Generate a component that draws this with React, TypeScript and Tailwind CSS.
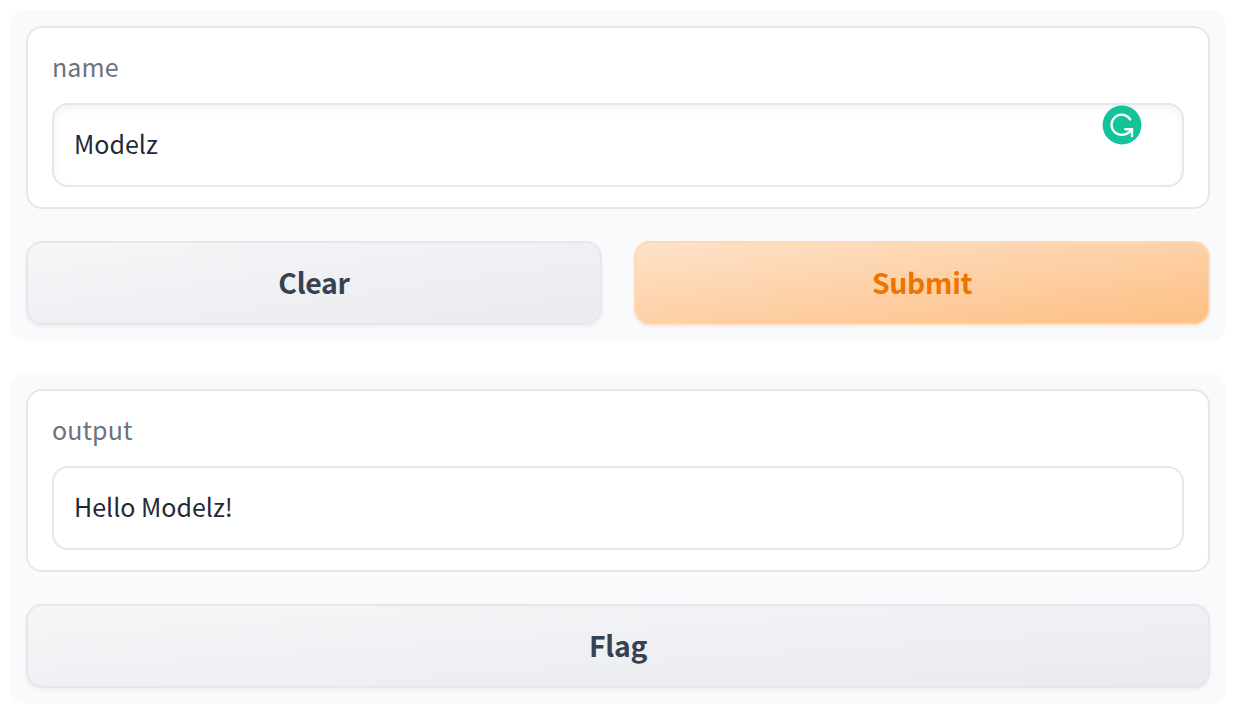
import type { ReactNode } from "react";

function Panel({ children }: { children: ReactNode }) {
  return (
    <section className="flex h-[331px] flex-col gap-8 rounded-2xl bg-[#f9fafb] p-4">{children}</section>
  );
}

function Field({ label, children }: { label: string; children: ReactNode }) {
  return (
    <div className="flex h-[183px] flex-col rounded-2xl border-2 border-[#e5e7eb] bg-white px-6 pt-[18px]">
      <span className="mb-4 h-[41px] text-[25px] leading-[41px] tracking-[0.1px] text-[#6b7280]">{label}</span>
      {children}
    </div>
  );
}

const fieldBox =
  "relative flex h-[84px] items-center rounded-2xl border-2 border-[#e5e7eb] bg-white px-5 pb-1 text-[25px] leading-9 text-[#1f2937]";
const buttonBase =
  "flex h-[84px] flex-1 items-center justify-center rounded-2xl border-2 pb-[2px] text-[28.4px] leading-none font-semibold tracking-[-0.3px] shadow-[0_2px_4px_0_rgba(0,0,0,0.05)]";
const secondary =
  "border-[#e5e7eb] text-[#374151] bg-[linear-gradient(to_bottom_right,rgba(243,244,246,0.7),rgba(229,231,235,0.8))]";
const primary =
  "border-[#ffd8b4] text-[#ee7400] bg-[linear-gradient(to_bottom_right,rgba(255,216,180,0.7),rgba(255,176,102,0.8))]";

function AssistantBadge() {
  return (
    <svg className="absolute top-0 right-10 size-10" viewBox="0 0 40 40" fill="none">
      <circle cx="20" cy="20" r="19.4" fill="#15c39a" />
      <path
        d="M28.2 14.4A10.1 10.1 0 1 0 20.5 29.8C24.4 29.8 27.4 27.7 29.8 24.6"
        stroke="#fff"
        strokeWidth="2.4"
        strokeLinecap="round"
      />
      <path d="M23.3 24.3H30V31" stroke="#fff" strokeWidth="2.4" strokeLinecap="round" />
    </svg>
  );
}

export default function App() {
  return (
    <main className="flex h-[718px] w-[1238px] flex-col gap-8 overflow-hidden bg-white py-[10px] pr-3 pl-[10px] font-['Noto_Sans_CJK_SC',sans-serif]">
      <Panel>
        <Field label="name">
          <div className={`${fieldBox} shadow-[inset_0_4px_8px_0_rgba(0,0,0,0.05)]`}>
            Modelz
            <AssistantBadge />
          </div>
        </Field>
        <div className="flex gap-8">
          <button className={`${buttonBase} ${secondary}`}>Clear</button>
          <button className={`${buttonBase} ${primary}`}>Submit</button>
        </div>
      </Panel>
      <Panel>
        <Field label="output">
          <div className={fieldBox}>Hello Modelz!</div>
        </Field>
        <div className="flex">
          <button className={`${buttonBase} ${secondary}`}>Flag</button>
        </div>
      </Panel>
    </main>
  );
}
